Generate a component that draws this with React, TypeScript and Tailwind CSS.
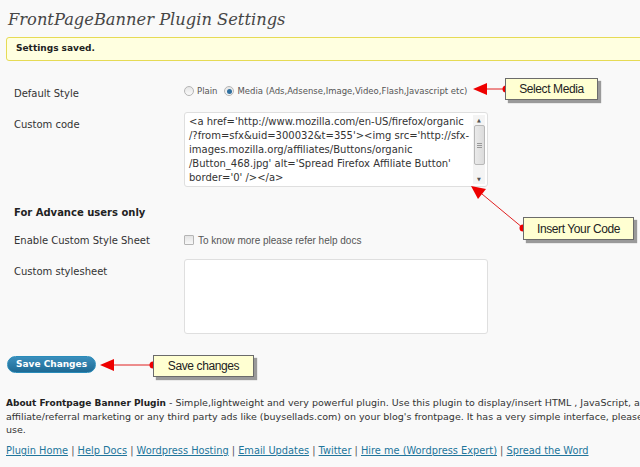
import React from "react";

const sans = "font-['DejaVu_Sans','Verdana',sans-serif]";

function Callout({ text, className }: { text: string; className: string }) {
  return (
    <div
      className={`absolute flex items-center justify-center border border-[#6b6b6b] bg-[#ffffd2] font-['Liberation_Sans',Arial,sans-serif] text-[12px] tracking-[-0.4px] text-[#222] shadow-[3px_3px_1px_#9a9a9a] ${className}`}
    >
      {text}
    </div>
  );
}

function Arrows() {
  return (
    <svg className="pointer-events-none absolute inset-0" width="640" height="467" viewBox="0 0 640 467">
      {/* select media */}
      <line x1="484" y1="89" x2="506" y2="89" stroke="#e02020" strokeWidth="1" />
      <polygon points="473,89 487,83 487,95" fill="#ee0000" />
      <circle cx="506" cy="89" r="3.5" fill="#ee0000" />
      {/* insert code */}
      <line x1="482" y1="194" x2="523" y2="228" stroke="#e02020" strokeWidth="1" />
      <polygon points="471,186 478,199 486,189" fill="#ee0000" />
      <circle cx="523" cy="228" r="3.5" fill="#ee0000" />
      {/* save changes */}
      <line x1="112" y1="365" x2="153" y2="365" stroke="#e02020" strokeWidth="1" />
      <polygon points="100,365 114,359 114,371" fill="#ee0000" />
      <circle cx="153" cy="365" r="3.5" fill="#ee0000" />
    </svg>
  );
}

function Radio({ checked }: { checked?: boolean }) {
  return (
    <span className="inline-flex h-[10px] w-[10px] items-center justify-center rounded-full border border-[#b5b5b5] bg-gradient-to-b from-[#e6e6e6] to-[#fafafa]">
      {checked && <span className="h-[5px] w-[5px] rounded-full bg-[#2f6f9f]" />}
    </span>
  );
}

export default function App() {
  const code =
    "<a href='http://www.mozilla.com/en-US/firefox/organic /?from=sfx&uid=300032&t=355'><img src='http://sfx-images.mozilla.org/affiliates/Buttons/organic /Button_468.jpg' alt='Spread Firefox Affiliate Button' border='0' /></a>";
  return (
    <div className={`relative h-[467px] w-[640px] overflow-hidden bg-[#f9f9f9] text-[#333] ${sans}`}>
      <h2 className="pl-[8px] pt-[7px] font-['DejaVu_Serif',Georgia,serif] text-[16.3px] italic leading-[26px] text-[#464646]">
        FrontPageBanner Plugin Settings
      </h2>
      <div className="ml-[6px] mt-[4px] flex h-[24px] w-[650px] items-center rounded-[3px] border border-[#e6db55] bg-[#ffffe0] pl-[9px] text-[9px] font-bold text-[#222]">
        Settings saved.
      </div>

      <div className="mt-[20px] pl-[14px] text-[10px]">
        <div className="flex h-[20px] items-center">
          <div className="w-[170px] pt-[4px]">Default Style</div>
          <div className="flex items-center gap-[3px] text-[8.5px] text-[#555]">
            <Radio />
            <span className="mr-[4px]">Plain</span>
            <Radio checked />
            <span>Media (Ads,Adsense,Image,Video,Flash,Javascript etc)</span>
          </div>
        </div>

        <div className="mt-[11px] flex">
          <div className="w-[170px] pt-[5px]">Custom code</div>
          <div className="flex h-[75px] w-[304px] rounded-[3px] border border-[#dfdfdf] bg-white">
            <div className="flex-1 overflow-hidden pl-[4px] pt-[2px] text-[10px] leading-[14px] text-[#333]">
              {code}
            </div>
            <div className="my-[2px] mr-[2px] flex w-[12px] flex-col items-center bg-[#f4f4f4]">
              <span className="text-[5px] leading-[10px] text-[#555]">▲</span>
              <div className="flex h-[40px] w-[11px] flex-col items-center justify-center gap-[1px] rounded-[2px] border border-[#b8b8b8] bg-gradient-to-r from-[#eaeaea] to-[#dcdcdc]">
                <span className="h-px w-[5px] bg-[#999]" />
                <span className="h-px w-[5px] bg-[#999]" />
                <span className="h-px w-[5px] bg-[#999]" />
              </div>
              <span className="mt-auto text-[5px] leading-[10px] text-[#555]">▼</span>
            </div>
          </div>
        </div>

        <div className="mt-[18px] h-[12px] font-bold text-[#222]">For Advance users only</div>

        <div className="mt-[17px] flex h-[12px] items-center">
          <div className="w-[170px]">Enable Custom Style Sheet</div>
          <span className="mr-[4px] h-[10px] w-[10px] rounded-[1px] border border-[#b5b5b5] bg-gradient-to-b from-[#e4e4e4] to-[#f8f8f8]" />
          <span className="font-['Liberation_Sans',Arial,sans-serif] text-[10px] text-[#555]">
            To know more please refer help docs
          </span>
        </div>

        <div className="mt-[13px] flex">
          <div className="w-[170px] pt-[5px]">Custom stylesheet</div>
          <div className="h-[75px] w-[304px] rounded-[3px] border border-[#dfdfdf] bg-white" />
        </div>
      </div>

      <div className="mt-[22px] pl-[7px]">
        <button className="flex h-[17px] w-[89px] items-center justify-center rounded-full border border-[#298cba] bg-gradient-to-b from-[#3b8fbd] to-[#1e6a94] text-[9px] font-bold text-white">
          Save Changes
        </button>
      </div>

      <p className="mt-[23px] whitespace-nowrap pl-[6px] text-[9.5px] leading-[13px] text-[#333]">
        <b className="text-[9px] text-[#222]">About Frontpage Banner Plugin</b> - Simple,lightweight and very powerful plugin. Use this plugin to display/insert HTML , JavaScript, and
        <br />
        affiliate/referral marketing or any third party ads like (buysellads.com) on your blog's frontpage. It has a very simple interface, please
        <br />
        use.
      </p>

      <div className="mt-[8px] whitespace-nowrap pl-[6px] text-[9.8px] text-[#555]">
        {["Plugin Home", "Help Docs", "Wordpress Hosting", "Email Updates", "Twitter", "Hire me (Wordpress Expert)", "Spread the Word"].map((l, i) => (
          <span key={l}>
            {i > 0 && " | "}
            <a className="text-[#21759b] underline">{l}</a>
          </span>
        ))}
      </div>

      <Arrows />
      <Callout text="Select Media" className="left-[505px] top-[78px] h-[22px] w-[93px]" />
      <Callout text="Insert Your Code" className="left-[523px] top-[217px] h-[23px] w-[111px]" />
      <Callout text="Save changes" className="left-[153px] top-[355px] h-[22px] w-[101px]" />
    </div>
  );
}
